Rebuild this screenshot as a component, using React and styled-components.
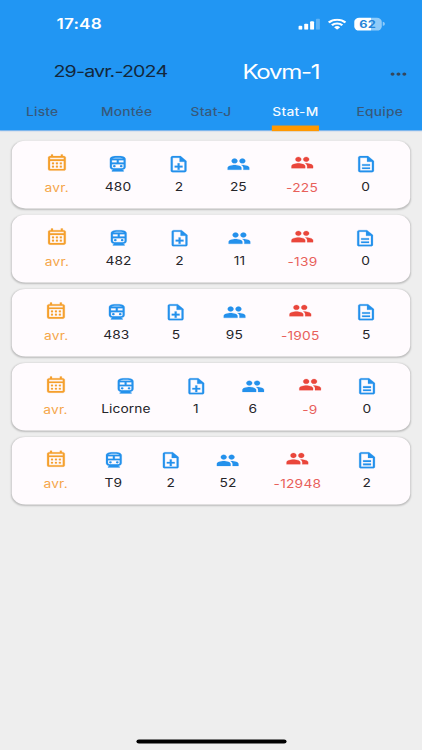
import styled, { createGlobalStyle } from "styled-components";
import {
  MdOutlineCalendarMonth,
  MdOutlineNoteAdd,
  MdPeople,
  MdOutlineDescription,
  MdMoreHoriz,
} from "react-icons/md";

const GlobalStyle = createGlobalStyle`
  * {
    box-sizing: border-box;
  }
  body {
    margin: 0;
    background: #eeeeee;
    font-family: Inter, "Liberation Sans", sans-serif;
  }
`;

const Viewport = styled.div`
  width: 422px;
  height: 750px;
  overflow: hidden;
`;
// the phone is 430x932 points, shown stretched to a 422x750 frame
const Phone = styled.div`
  width: 430px;
  height: 932px;
  display: flex;
  flex-direction: column;
  background: #eeeeee;
  transform: scale(0.9814, 0.80472);
  transform-origin: 0 0;
`;
const Header = styled.header`
  height: 162px;
  display: flex;
  flex-direction: column;
  background: #2196f3;
  box-shadow: 0 1px 1px rgba(33, 110, 220, 0.3);
`;
const StatusBar = styled.div`
  height: 59px;
  display: flex;
  justify-content: space-between;
  align-items: center;
  padding: 0 38.5px 0 57.5px;
  color: #fff;
`;
const Time = styled.span`
  font-size: 17.5px;
  font-weight: 600;
  letter-spacing: 0.2px;
`;
const StatusIcons = styled.div`
  display: flex;
  align-items: center;
  gap: 8px;
  & svg {
    display: block;
  }
`;
const Battery = styled.div`
  display: flex;
  align-items: center;
  gap: 1px;

  &::after {
    content: "";
    width: 2px;
    height: 5px;
    border-radius: 0 2px 2px 0;
    background: #90cbf9;
  }
`;
const BatteryBody = styled.div`
  width: 28px;
  height: 16px;
  border-radius: 5px;
  display: flex;
  align-items: center;
  justify-content: center;
  background: linear-gradient(90deg, #fff 62%, #90cbf9 62%);
  color: #2584d8;
  font-size: 13px;
  font-weight: 700;
  letter-spacing: 0.2px;
`;
const TitleBar = styled.div`
  height: 56px;
  display: flex;
  align-items: center;
  padding: 3.5px 12px 0 54.5px;
`;
const DateText = styled.span`
  width: 192.5px;
  font-size: 20px;
  letter-spacing: -0.85px;
  color: #13283c;
`;
const Title = styled.span`
  flex: 1;
  font-size: 24.5px;
  letter-spacing: -1.3px;
  color: #fff;
`;
const Menu = styled.button`
  display: flex;
  padding: 6px 0 0;
  border: 0;
  background: none;
  color: #34475c;
  font-size: 24px;
`;
const Tabs = styled.nav`
  height: 47px;
  display: grid;
  grid-template-columns: repeat(5, 1fr);
  justify-items: center;
`;
const Tab = styled.div`
  height: 48px;
  line-height: 47px;
  font-size: 14px;
  font-weight: 500;
  letter-spacing: 0.25px;
  color: ${props => (props.$active ? "#f4faff" : "#37597b")};
  ${props => (props.$active ? "border-bottom: 7px solid #ff9800;" : "")}
`;
const List = styled.main`
  flex: 1;
  display: flex;
  flex-direction: column;
  gap: 8px;
  padding: 13px 12px 0;
`;
const Card = styled.div`
  height: 84px;
  display: flex;
  justify-content: space-around;
  align-items: center;
  padding: 0 15px;
  border-radius: 14px;
  background: #fffbfe;
  box-shadow: 0 1px 2px rgba(0, 0, 0, 0.2);
`;
const colors = {
  blue: ["#2491ec", "#25252a"],
  orange: ["#f5a02d", "#f5a64a"],
  red: ["#ea463b", "#e8605a"],
};
const Stat = styled.div`
  display: flex;
  flex-direction: column;
  align-items: center;
  gap: ${props => (props.$tone === "blue" ? 6 : 10.5)}px;
  font-size: 14px;
  line-height: 20px;
  letter-spacing: ${props => (props.$tone === "blue" ? 0.1 : 0.25)}px;
  color: ${props => colors[props.$tone][1]};

  & svg {
    display: block;
    font-size: 24px;
    color: ${props => colors[props.$tone][0]};
  }
  & svg path:not([fill="none"]) {
    stroke: currentColor;
    stroke-width: 0.25px;
  }
  & svg path[fill="none"] {
    stroke: none;
  }
`;
const HomeIndicator = styled.div`
  width: 153px;
  height: 5px;
  margin: 0 auto 8.5px;
  border-radius: 3px;
  background: #000;
`;

const tabs = ["Liste", "Montée", "Stat-J", "Stat-M", "Equipe"];

const rows = [
  { line: "480", notes: 2, people: 25, diff: -225, docs: 0 },
  { line: "482", notes: 2, people: 11, diff: -139, docs: 0 },
  { line: "483", notes: 5, people: 95, diff: -1905, docs: 5 },
  { line: "Licorne", notes: 1, people: 6, diff: -9, docs: 0 },
  { line: "T9", notes: 2, people: 52, diff: -12948, docs: 2 },
];

const StatItem = ({ icon: Icon, tone = "blue", children }) => (
  <Stat $tone={tone}>
    <Icon />
    <span>{children}</span>
  </Stat>
);

const Transit = () => (
  <svg width="24" height="24" viewBox="0 0 24 24" fill="currentColor">
    <path
      fillRule="evenodd"
      d="M12 2c-4 0-8 .5-8 4v9.5C4 17.43 5.57 19 7.5 19L6 20v1h12v-1l-1.5-1c1.93 0 3.5-1.57 3.5-3.5V6c0-3.5-4-4-8-4zm0 2c3.51 0 4.96.48 5.57 1H6.43C7.04 4.48 8.49 4 12 4zM6 7h5v3H6V7zm12 3h-5V7h5v3zM6 12h12v3.5c0 .83-.67 1.5-1.5 1.5h-9c-.83 0-1.5-.67-1.5-1.5V12z"
    />
    <circle cx="8.5" cy="14.5" r="1.4" />
    <circle cx="15.5" cy="14.5" r="1.4" />
  </svg>
);

const Signal = () => (
  <svg width="22" height="14" viewBox="0 0 22 14" fill="#fff">
    <rect x="0" y="9" width="4" height="5" rx="1.1" />
    <rect x="6" y="6.5" width="4" height="7.5" rx="1.1" />
    <rect x="12" y="3.5" width="4" height="10.5" rx="1.1" />
    <rect x="18" y="0" width="4" height="14" rx="1.1" opacity="0.28" />
  </svg>
);

const Wifi = () => (
  <svg width="19" height="14" viewBox="0 0 19 14">
    <g fill="none" stroke="#fff" strokeWidth="2.6">
      <path d="M1 4.9a12.2 12.2 0 0 1 17 0" />
      <path d="M4.2 8.4a7.6 7.6 0 0 1 10.6 0" />
    </g>
    <path d="M9.5 14 6.4 11a4.4 4.4 0 0 1 6.2 0z" fill="#fff" />
  </svg>
);

const App = () => {
  return (
    <Viewport>
      <GlobalStyle />
      <Phone>
        <Header>
          <StatusBar>
            <Time>17:48</Time>
            <StatusIcons>
              <Signal />
              <Wifi />
              <Battery>
                <BatteryBody>62</BatteryBody>
              </Battery>
            </StatusIcons>
          </StatusBar>
          <TitleBar>
            <DateText>29-avr.-2024</DateText>
            <Title>Kovm-1</Title>
            <Menu>
              <MdMoreHoriz />
            </Menu>
          </TitleBar>
          <Tabs>
            {tabs.map(name => (
              <Tab key={name} $active={name === "Stat-M"}>
                {name}
              </Tab>
            ))}
          </Tabs>
        </Header>
        <List>
          {rows.map(row => (
            <Card key={row.line}>
              <StatItem icon={MdOutlineCalendarMonth} tone="orange">
                avr.
              </StatItem>
              <StatItem icon={Transit}>{row.line}</StatItem>
              <StatItem icon={MdOutlineNoteAdd}>{row.notes}</StatItem>
              <StatItem icon={MdPeople}>{row.people}</StatItem>
              <StatItem icon={MdPeople} tone="red">
                {row.diff}
              </StatItem>
              <StatItem icon={MdOutlineDescription}>{row.docs}</StatItem>
            </Card>
          ))}
        </List>
        <HomeIndicator />
      </Phone>
    </Viewport>
  );
};

export default App;
